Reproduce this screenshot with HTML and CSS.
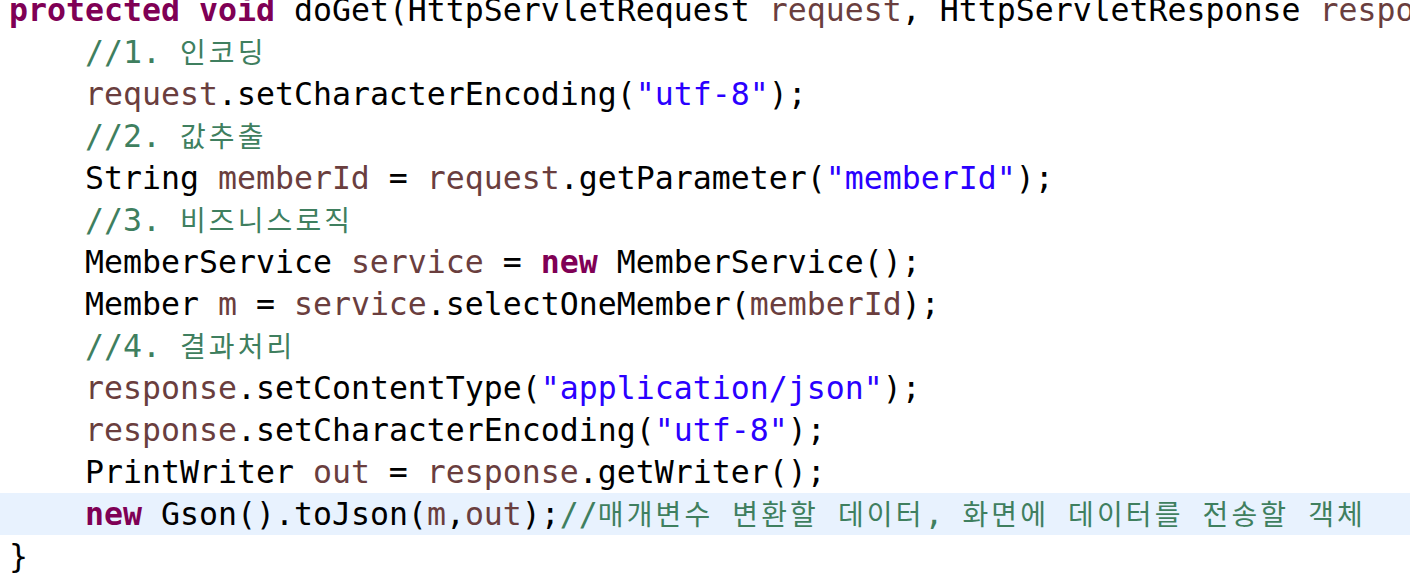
FILE: index.html
```html
<!DOCTYPE html>
<html lang="ko">
<head>
    <meta charset="UTF-8">
    <title>MemberServlet.java</title>
    <link rel="stylesheet" href="styles.css">
</head>
<body>

<!-- Editor area (only the doGet method is visible) -->
<div class="editor">
    <div class="line"><span class="kw">protected</span> <span class="kw">void</span> doGet(HttpServletRequest <span class="var">request</span>, HttpServletResponse <span class="var">response</span>) <span class="kw">throws</span> ServletException, IOException {</div>
    <div class="line">    <span class="cm">//1. <span class="ko">인코딩</span></span></div>
    <div class="line">    <span class="var">request</span>.setCharacterEncoding(<span class="str">"utf-8"</span>);</div>
    <div class="line">    <span class="cm">//2. <span class="ko">값추출</span></span></div>
    <div class="line">    String <span class="var">memberId</span> = <span class="var">request</span>.getParameter(<span class="str">"memberId"</span>);</div>
    <div class="line">    <span class="cm">//3. <span class="ko">비즈니스로직</span></span></div>
    <div class="line">    MemberService <span class="var">service</span> = <span class="kw">new</span> MemberService();</div>
    <div class="line">    Member <span class="var">m</span> = <span class="var">service</span>.selectOneMember(<span class="var">memberId</span>);</div>
    <div class="line">    <span class="cm">//4. <span class="ko">결과처리</span></span></div>
    <div class="line">    <span class="var">response</span>.setContentType(<span class="str">"application/json"</span>);</div>
    <div class="line">    <span class="var">response</span>.setCharacterEncoding(<span class="str">"utf-8"</span>);</div>
    <div class="line">    PrintWriter <span class="var">out</span> = <span class="var">response</span>.getWriter();</div>
    <div class="line current">    <span class="kw">new</span> Gson().toJson(<span class="var">m</span>,<span class="var">out</span>);<span class="cm">//<span class="ko">매개변수</span> <span class="ko">변환할</span> <span class="ko">데이터</span>, <span class="ko">화면에</span> <span class="ko">데이터를</span> <span class="ko">전송할</span> <span class="ko">객체</span></span></div>
    <div class="line">}</div>
</div>

</body>
</html>
```

FILE: styles.css
```css
body {
    margin: 0;
    background-color: #ffffff;
    overflow: hidden;
}
.editor {
    margin-top: -11px;
    font-family: 'DejaVu Sans Mono', 'Noto Sans CJK KR', monospace;
    font-size: 31.56px;
    color: #000000;
}
.line {
    height: 42px;
    line-height: 42px;
    padding-left: 9px;
    white-space: pre;
}
.current {
    background-color: #e8f2fe; /* current line highlight */
}
.kw {
    color: #7f0055;
    font-weight: bold;
}
.var {
    color: #6a3e3e;
}
.str {
    color: #2a00ff;
}
.cm {
    color: #3f7f5f;
}
.ko {
    font-family: 'Noto Sans CJK KR', sans-serif;
    font-size: 28px;
    letter-spacing: 3.1px;
    line-height: 1;
}
```
